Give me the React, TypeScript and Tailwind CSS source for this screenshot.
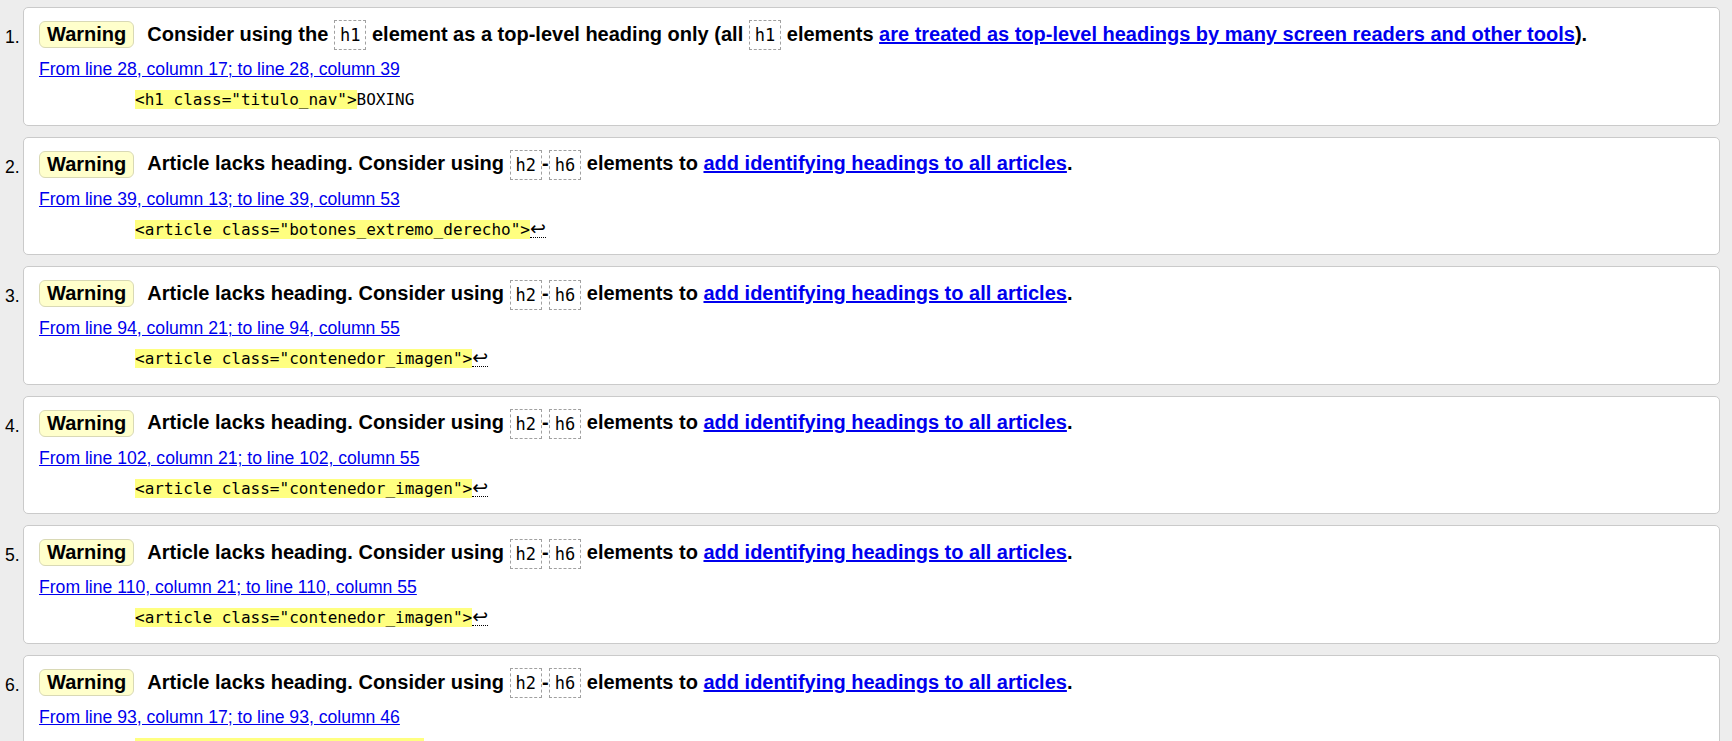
import React from "react";

type Item = {
  n: number;
  kind: "h1" | "article";
  loc: string;
  code: string;
  after?: string;
  arrow?: boolean;
};

const items: Item[] = [
  { n: 1, kind: "h1", loc: "From line 28, column 17; to line 28, column 39", code: '<h1 class="titulo_nav">', after: "BOXING" },
  { n: 2, kind: "article", loc: "From line 39, column 13; to line 39, column 53", code: '<article class="botones_extremo_derecho">', arrow: true },
  { n: 3, kind: "article", loc: "From line 94, column 21; to line 94, column 55", code: '<article class="contenedor_imagen">', arrow: true },
  { n: 4, kind: "article", loc: "From line 102, column 21; to line 102, column 55", code: '<article class="contenedor_imagen">', arrow: true },
  { n: 5, kind: "article", loc: "From line 110, column 21; to line 110, column 55", code: '<article class="contenedor_imagen">', arrow: true },
  { n: 6, kind: "article", loc: "From line 93, column 17; to line 93, column 46", code: '<article class="contenedores">', arrow: true },
];

const mono = "font-['DejaVu_Sans_Mono','Liberation_Mono',monospace]";

function Code({ children }: { children: React.ReactNode }) {
  return (
    <code
      className={`${mono} inline-block align-middle border border-dashed border-[#a0a0a0] px-[5px] text-[17px] leading-[28px] font-normal text-black`}
    >
      {children}
    </code>
  );
}

function Message({ kind }: { kind: Item["kind"] }) {
  if (kind === "h1") {
    return (
      <span>
        Consider using the <Code>h1</Code> element as a top-level heading only (all <Code>h1</Code> elements{" "}
        <a href="#" className="text-[#0000ee] underline">
          are treated as top-level headings by many screen readers and other tools
        </a>
        ).
      </span>
    );
  }
  return (
    <span>
      Article lacks heading. Consider using <Code>h2</Code>-<Code>h6</Code> elements to{" "}
      <a href="#" className="text-[#0000ee] underline">
        add identifying headings to all articles
      </a>
      .
    </span>
  );
}

function Card({ item }: { item: Item }) {
  return (
    <div className="flex">
      <div className="w-[23px] shrink-0 pl-[5px] pt-[20px] text-[17.6px] leading-[20px] text-black">{item.n}.</div>
      <div className="flex-1 h-[118.6px] box-border border border-[#cacaca] rounded-[5px] bg-white pl-[15px] pt-[11px]">
        <div className="flex items-center h-[31px] text-[20px] font-bold text-black leading-[31px] whitespace-nowrap">
          <span className="inline-block h-[27px] box-border border border-[#d9d9b5] bg-[#ffffcc] rounded-[6px] px-[7px] leading-[25px] mr-[13px]">
            Warning
          </span>
          <Message kind={item.kind} />
        </div>
        <div className="mt-[9px] h-[20px] leading-[20px] text-[17.6px]">
          <a href="#" className="text-[#0000ee] underline">
            {item.loc}
          </a>
        </div>
        <div className={`mt-[11px] h-[19px] leading-[19px] pl-[96px] ${mono} text-[16px] text-black whitespace-pre`}>
          <span className="bg-[#ffff80]">{item.code}</span>
          {item.after ? <span>{item.after}</span> : null}
          {item.arrow ? (
            <span className="inline-block border-b border-dotted border-black font-['DejaVu_Sans',sans-serif] text-[19px] leading-[17px]">
              ↩
            </span>
          ) : null}
        </div>
      </div>
    </div>
  );
}

export default function App() {
  return (
    <div className="min-h-[741px] bg-[#ededed] pt-[7px] pr-[12px] font-['Liberation_Sans',Arial,sans-serif]">
      <div className="flex flex-col gap-[11px]">
        {items.map((it) => (
          <Card key={it.n} item={it} />
        ))}
      </div>
    </div>
  );
}
